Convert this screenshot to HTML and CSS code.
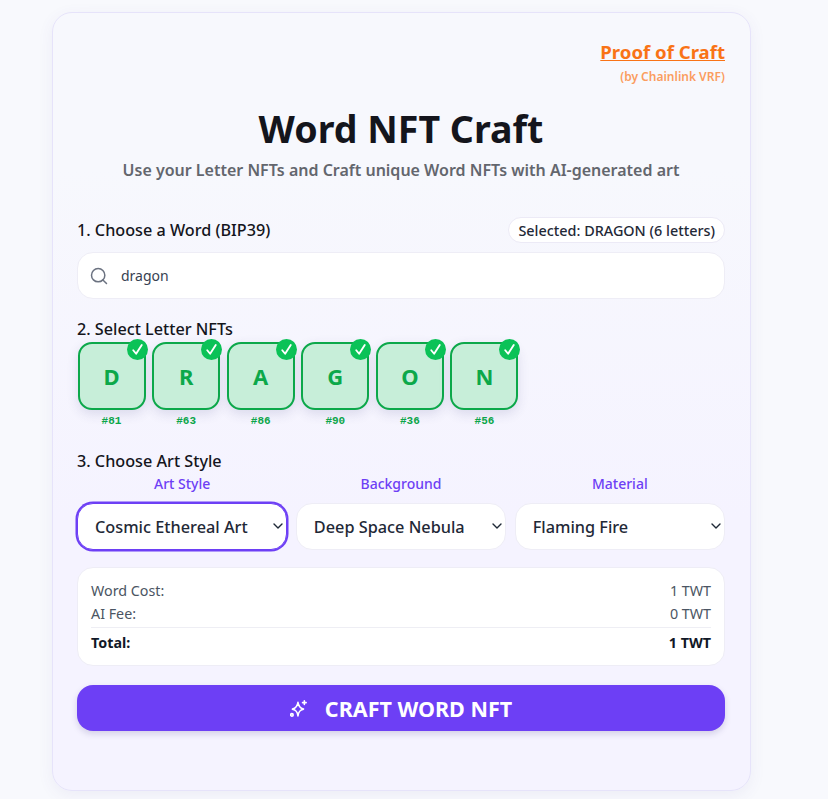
FILE: index.html
```html
<!DOCTYPE html>
<html lang="en">
<head>
  <meta charset="UTF-8">
  <title>Word NFT Craft</title>
  <link rel="stylesheet" href="styles.css">
</head>
<body>

  <div class="card">
    <div class="proof">
      <a href="#" class="proof-link">Proof of Craft</a>
      <span class="proof-sub">(by Chainlink VRF)</span>
    </div>

    <h1>Word NFT Craft</h1>
    <p class="subtitle">Use your Letter NFTs and Craft unique Word NFTs with AI-generated art</p>

    <div class="step-head">
      <span class="step-title">1. Choose a Word (BIP39)</span>
      <span class="pill">Selected: DRAGON (6 letters)</span>
    </div>
    <div class="search">
      <svg class="search-icon" width="20" height="20" viewBox="0 0 24 24" fill="none" stroke="#6b7280" stroke-width="1.8" stroke-linecap="round"><circle cx="11" cy="11" r="8"/><path d="M21 21l-4.3-4.3"/></svg>
      <input class="search-input" type="text" value="dragon">
    </div>

    <div class="step-title step-two">2. Select Letter NFTs</div>
    <div class="letters">
      <div class="letter"><div class="tile">D<span class="tick"><svg width="15" height="15" viewBox="0 0 12 12" fill="none" stroke="#fff" stroke-width="1.5" stroke-linecap="round" stroke-linejoin="round"><path d="M2.6 6.6l2.3 2.8L9.4 2.4"/></svg></span></div><span class="token">#81</span></div>
      <div class="letter"><div class="tile">R<span class="tick"><svg width="15" height="15" viewBox="0 0 12 12" fill="none" stroke="#fff" stroke-width="1.5" stroke-linecap="round" stroke-linejoin="round"><path d="M2.6 6.6l2.3 2.8L9.4 2.4"/></svg></span></div><span class="token">#63</span></div>
      <div class="letter"><div class="tile">A<span class="tick"><svg width="15" height="15" viewBox="0 0 12 12" fill="none" stroke="#fff" stroke-width="1.5" stroke-linecap="round" stroke-linejoin="round"><path d="M2.6 6.6l2.3 2.8L9.4 2.4"/></svg></span></div><span class="token">#86</span></div>
      <div class="letter"><div class="tile">G<span class="tick"><svg width="15" height="15" viewBox="0 0 12 12" fill="none" stroke="#fff" stroke-width="1.5" stroke-linecap="round" stroke-linejoin="round"><path d="M2.6 6.6l2.3 2.8L9.4 2.4"/></svg></span></div><span class="token">#90</span></div>
      <div class="letter"><div class="tile">O<span class="tick"><svg width="15" height="15" viewBox="0 0 12 12" fill="none" stroke="#fff" stroke-width="1.5" stroke-linecap="round" stroke-linejoin="round"><path d="M2.6 6.6l2.3 2.8L9.4 2.4"/></svg></span></div><span class="token">#36</span></div>
      <div class="letter"><div class="tile">N<span class="tick"><svg width="15" height="15" viewBox="0 0 12 12" fill="none" stroke="#fff" stroke-width="1.5" stroke-linecap="round" stroke-linejoin="round"><path d="M2.6 6.6l2.3 2.8L9.4 2.4"/></svg></span></div><span class="token">#56</span></div>
    </div>

    <div class="step-title step-three">3. Choose Art Style</div>
    <div class="styles">
      <div class="style-col">
        <label class="style-label">Art Style</label>
        <div class="select-wrap focused">
          <select class="select"><option>Cosmic Ethereal Art</option></select>
          <svg class="chevron" width="12" height="12" viewBox="0 0 12 12" fill="none" stroke="#1f2937" stroke-width="1.4" stroke-linecap="round" stroke-linejoin="round"><path d="M2 4l4 4 4-4"/></svg>
        </div>
      </div>
      <div class="style-col">
        <label class="style-label">Background</label>
        <div class="select-wrap">
          <select class="select"><option>Deep Space Nebula</option></select>
          <svg class="chevron" width="12" height="12" viewBox="0 0 12 12" fill="none" stroke="#1f2937" stroke-width="1.4" stroke-linecap="round" stroke-linejoin="round"><path d="M2 4l4 4 4-4"/></svg>
        </div>
      </div>
      <div class="style-col">
        <label class="style-label">Material</label>
        <div class="select-wrap">
          <select class="select"><option>Flaming Fire</option></select>
          <svg class="chevron" width="12" height="12" viewBox="0 0 12 12" fill="none" stroke="#1f2937" stroke-width="1.4" stroke-linecap="round" stroke-linejoin="round"><path d="M2 4l4 4 4-4"/></svg>
        </div>
      </div>
    </div>

    <div class="cost">
      <div class="cost-row"><span>Word Cost:</span><span>1 TWT</span></div>
      <div class="cost-row"><span>AI Fee:</span><span>0 TWT</span></div>
      <div class="cost-row cost-total"><span>Total:</span><span>1 TWT</span></div>
    </div>

    <button class="craft">
      <svg width="17" height="17" viewBox="0 0 16 16" fill="none" stroke="#fff" stroke-width="1.5" stroke-linecap="round" stroke-linejoin="round"><path d="M7.5 2.2c.5 3.500 1.800 5.400 5.200 6.400-3.400 1-4.700 2.300-5.200 6.400-.5-4.100-1.800-5.400-5.200-6.400 3.400-1 4.700-2.900 5.200-6.400z"/><path d="M13.500 .8v3.400M11.800 2.500h3.400"/><circle cx="1.800" cy="14" r="1.200"/></svg>
      CRAFT WORD NFT
    </button>
  </div>

</body>
</html>
```

FILE: styles.css
```css
* {
  box-sizing: border-box;
}

body {
  margin: 0;
  height: 799px;
  overflow: hidden;
  background-color: #f8f9fd;
  font-family: "Noto Sans", sans-serif;
  color: #111827;
  padding: 12px 77px 0 52px;
}

.card {
  height: 779px;
  padding: 27px 25px 0 24px;
  border: 1.5px solid #e6e3fa;
  border-radius: 20px;
  background: linear-gradient(180deg, #f7f8fd 20%, #f5f3ff 65%);
  box-shadow: 0 4px 16px rgba(80, 70, 160, 0.07);
}

.proof {
  display: flex;
  flex-direction: column;
  align-items: flex-end;
}

.proof-link {
  font-size: 18.6px;
  line-height: 24px;
  font-weight: 700;
  color: #f97316;
}

.proof-sub {
  font-size: 12px;
  line-height: 16px;
  margin-top: 5px;
  font-weight: 600;
  color: #fb9d5f;
}

h1 {
  margin: 19px 0 0;
  font-size: 37.6px;
  line-height: 50px;
  font-weight: 700;
  text-align: center;
  color: #14151c;
}

.subtitle {
  margin: 4px 0 0;
  font-size: 16px;
  line-height: 24px;
  font-weight: 600;
  text-align: center;
  color: #63666d;
}

.step-head {
  display: flex;
  justify-content: space-between;
  align-items: center;
  margin-top: 35px;
  height: 26px;
}

.step-title {
  font-size: 16.2px;
  line-height: 22px;
  font-weight: 500;
  color: #14151c;
}

.pill {
  padding: 0 9px;
  height: 26px;
  line-height: 26px;
  font-size: 14.4px;
  font-weight: 500;
  background-color: #fff;
  border: 1px solid #eceaf6;
  border-radius: 13px;
  color: #1f2937;
}

.search {
  display: flex;
  align-items: center;
  gap: 12px;
  height: 47px;
  margin-top: 9px;
  padding-left: 11px;
  background-color: #fff;
  border: 1px solid #eeedf6;
  border-radius: 16px;
}

.search-icon {
  flex: none;
}

.search-input {
  flex: 1;
  border: none;
  outline: none;
  background: none;
  padding: 0;
  font-family: inherit;
  font-size: 14px;
  color: #374151;
}

.step-two {
  margin-top: 19px;
}

.letters {
  display: flex;
  gap: 6.6px;
  margin-top: 2px;
  padding-left: 0.5px;
}

.letter {
  display: flex;
  flex-direction: column;
  align-items: center;
  width: 68px;
}

.tile {
  position: relative;
  display: flex;
  align-items: center;
  justify-content: center;
  width: 68px;
  height: 68px;
  border: 2px solid #0ca84a;
  border-radius: 14px;
  background-color: #c7eed9;
  box-shadow: 0 4px 12px rgba(60, 60, 120, 0.14);
  font-size: 22px;
  font-weight: 700;
  color: #0ca84a;
}

.tick {
  position: absolute;
  top: -5px;
  right: -4px;
  display: flex;
  align-items: center;
  justify-content: center;
  width: 21px;
  height: 21px;
  border-radius: 50%;
  background-color: #0bc257;
}

.token {
  margin-top: 4px;
  font-family: "Liberation Mono", monospace;
  font-size: 11px;
  line-height: 14px;
  font-weight: 700;
  color: #0ca84a;
}

.step-three {
  margin-top: 22px;
}

.styles {
  display: grid;
  grid-template-columns: repeat(3, 1fr);
  gap: 8.5px;
  margin-top: 2px;
}

.style-col {
  display: flex;
  flex-direction: column;
  gap: 10px;
}

.style-label {
  font-size: 14px;
  line-height: 19px;
  font-weight: 500;
  text-align: center;
  color: #6d3ff5;
}

.select-wrap {
  position: relative;
}

.select {
  display: block;
  width: 100%;
  height: 47px;
  padding: 0 24px 0 17px;
  appearance: none;
  font-family: inherit;
  font-size: 16.3px;
  font-weight: 500;
  color: #1f2937;
  background-color: #fff;
  border: 1px solid #eeedf6;
  border-radius: 16px;
  outline: none;
}

.focused .select {
  border-color: #6d3ff5;
  box-shadow: 0 0 0 1.5px #6d3ff5;
}

.chevron {
  position: absolute;
  top: 17px;
  right: 3px;
  pointer-events: none;
}

.cost {
  margin-top: 17px;
  height: 99px;
  padding: 11px 13px 0;
  background-color: #fff;
  border: 1px solid #eeedf6;
  border-radius: 16px;
}

.cost-row {
  display: flex;
  justify-content: space-between;
  font-size: 14.3px;
  line-height: 23px;
  color: #4b5563;
}

.cost-total {
  margin-top: 2px;
  padding-top: 3px;
  border-top: 1px solid #eeeef4;
  font-weight: 700;
  color: #111827;
}

.craft {
  display: flex;
  align-items: center;
  justify-content: center;
  gap: 18px;
  width: 100%;
  height: 46px;
  margin-top: 19px;
  border: none;
  border-radius: 16px;
  background-color: #6d3ff5;
  box-shadow: 0 3px 6px rgba(60, 50, 120, 0.18);
  font-family: inherit;
  font-size: 21.5px;
  font-weight: 700;
  color: #fff;
}
```
